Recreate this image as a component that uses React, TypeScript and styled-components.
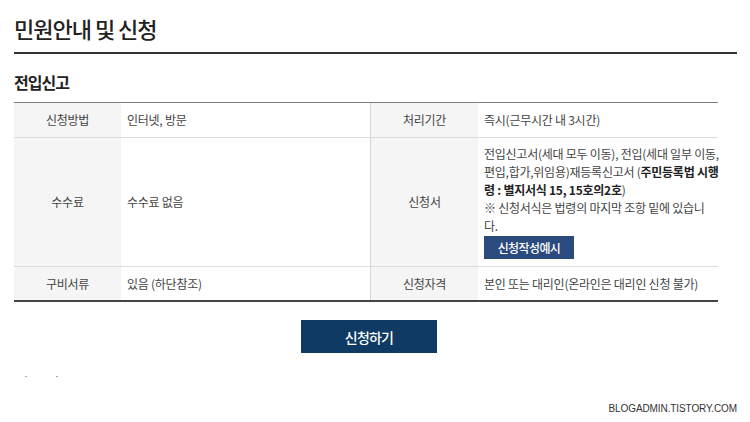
import React from "react";
import styled, { createGlobalStyle } from "styled-components";

const Global = createGlobalStyle`
  html, body { margin: 0; padding: 0; background: #fff; }
  body { font-family: "Noto Sans CJK KR", "Noto Sans", sans-serif; color: #333; }
  * { box-sizing: border-box; }
`;

const Page = styled.div`
  position: relative;
  width: 750px;
  height: 422px;
  padding: 0 13px 0 14px;
  overflow: hidden;
`;

const Title = styled.h1`
  margin: 0;
  padding: 14px 0 10px;
  font-size: 22px;
  font-weight: 500;
  letter-spacing: -1px;
  line-height: 28px;
  color: #222;
  border-bottom: 2px solid #333;
`;

const Section = styled.div`
  width: 704px;
`;

const SubTitle = styled.h2`
  margin: 17px 0 9px;
  font-size: 16px;
  font-weight: 700;
  letter-spacing: -1px;
  line-height: 22px;
  color: #222;
`;

const Table = styled.div`
  display: grid;
  grid-template-columns: 107px 250px 107px 240px;
  border-top: 1px solid #7d7d7d;
  border-bottom: 2px solid #444;
`;

const Cell = styled.div<{ $head?: boolean; $last?: boolean; $split?: boolean; $h: number }>`
  min-height: ${(p) => p.$h}px;
  display: flex;
  align-items: center;
  justify-content: ${(p) => (p.$head ? "center" : "flex-start")};
  padding: ${(p) => (p.$head ? "0" : "0 6px")};
  background: ${(p) => (p.$head ? "#f5f5f5" : "#fff")};
  border-bottom: ${(p) => (p.$last ? "none" : "1px solid #dcdcdc")};
  border-right: ${(p) => (p.$split ? "1px solid #d4d4d4" : "none")};
  font-size: 12px;
  letter-spacing: -0.25px;
  line-height: 18px;
  color: #444;
  white-space: nowrap;
`;

const Stack = styled.div`
  display: flex;
  flex-direction: column;
  align-items: flex-start;
  padding: 7px 0;
`;

const Strong = styled.b`
  font-weight: 700;
  color: #222;
`;

const SmallButton = styled.button`
  margin-top: 1px;
  width: 90px;
  height: 23px;
  border: none;
  background: #2b4a7e;
  color: #fff;
  font-family: inherit;
  font-size: 12px;
  font-weight: 500;
  letter-spacing: -0.6px;
  padding: 0;
`;

const ButtonRow = styled.div`
  display: flex;
  justify-content: center;
  padding: 18px 0 0 6px;
`;

const BigButton = styled.button`
  width: 136px;
  height: 33px;
  border: none;
  background: #0e3a63;
  color: #fff;
  font-family: inherit;
  font-size: 14px;
  font-weight: 500;
  letter-spacing: -0.8px;
  padding: 0;
`;

const Dots = styled.div`
  display: flex;
  gap: 29px;
  padding: 23px 0 0 11px;
`;

const Dot = styled.span`
  width: 2px;
  height: 1px;
  background: #aaa;
`;

const Watermark = styled.div`
  position: absolute;
  right: 13px;
  bottom: 8px;
  font-family: "Liberation Sans", Arial, sans-serif;
  font-size: 10px;
  letter-spacing: -0.1px;
  color: #333;
`;

export default function App() {
  return (
    <>
      <Global />
      <Page>
        <Title>민원안내 및 신청</Title>
        <Section>
          <SubTitle>전입신고</SubTitle>
          <Table>
            <Cell $head $h={35}>신청방법</Cell>
            <Cell $h={35} $split>인터넷, 방문</Cell>
            <Cell $head $h={35}>처리기간</Cell>
            <Cell $h={35}>즉시(근무시간 내 3시간)</Cell>

            <Cell $head $h={126}>수수료</Cell>
            <Cell $h={126} $split>수수료 없음</Cell>
            <Cell $head $h={126}>신청서</Cell>
            <Cell $h={126}>
              <Stack>
                <span>
                  전입신고서(세대 모두 이동), 전입(세대 일부 이동,
                  <br />
                  편입,합가,위임용)재등록신고서 (<Strong>주민등록법 시행</Strong>
                  <br />
                  <Strong>령 : 별지서식 15, 15호의2호</Strong>)
                  <br />※ 신청서식은 법령의 마지막 조항 밑에 있습니
                  <br />다.
                </span>
                <SmallButton>신청작성예시</SmallButton>
              </Stack>
            </Cell>

            <Cell $head $last $h={33}>구비서류</Cell>
            <Cell $last $h={33} $split>있음 (하단참조)</Cell>
            <Cell $head $last $h={33}>신청자격</Cell>
            <Cell $last $h={33}>본인 또는 대리인(온라인은 대리인 신청 불가)</Cell>
          </Table>
          <ButtonRow>
            <BigButton>신청하기</BigButton>
          </ButtonRow>
          <Dots>
            <Dot />
            <Dot />
          </Dots>
        </Section>
        <Watermark>BLOGADMIN.TISTORY.COM</Watermark>
      </Page>
    </>
  );
}
